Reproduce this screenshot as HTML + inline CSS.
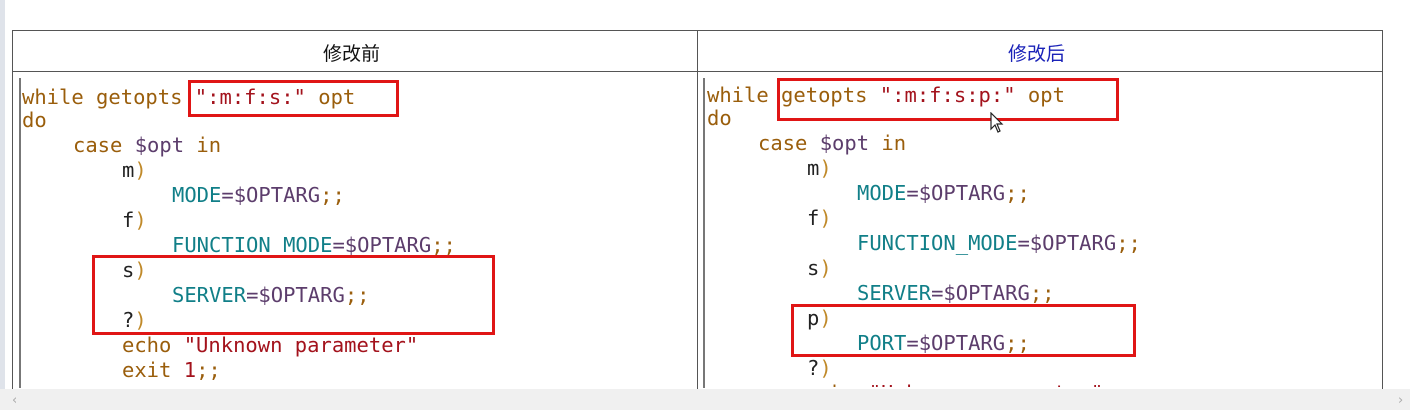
<!DOCTYPE html>
<html><head><meta charset="utf-8"><style>
body{margin:0;width:1410px;height:410px;background:#fff;position:relative;overflow:hidden;font-family:"DejaVu Sans Mono","Liberation Mono",monospace;}
.a{position:absolute}
.l{position:absolute;font-size:20.5px;line-height:24px;white-space:pre;}
.k{color:#9a5e0c}.p{color:#5c3d6c}.s{color:#a3121c}.t{color:#117f88}.b{color:#222}.o{color:#c08a2a}
.box{position:absolute;border:3px solid #e01515;}
.h{position:absolute;font-family:"Liberation Sans","Noto Sans CJK SC",sans-serif;font-size:19px;}
.clip{position:absolute;left:0;top:0;width:1410px;height:387px;overflow:hidden}
</style></head><body>
<div class="a" style="left:0;top:0;width:5px;height:392px;background:#dfe3ea"></div>
<div class="a" style="left:12px;top:30px;width:1369px;height:370px;border:1px solid #555;border-bottom:none"></div>
<div class="a" style="left:12px;top:71px;width:1370px;height:1px;background:#555"></div>
<div class="a" style="left:697px;top:30px;width:1px;height:360px;background:#555"></div>
<div class="a" style="left:19px;top:78px;width:2px;height:310px;background:#777"></div>
<div class="a" style="left:703px;top:78px;width:2px;height:310px;background:#777"></div>
<div class="h" style="left:323px;top:39px;color:#111">修改前</div>
<div class="h" style="left:1008px;top:39px;color:#1a22b8">修改后</div>
<div class="clip">
<div class="l" style="left:22px;top:85px"><span class="k">while getopts </span><span class="s">":m:f:s:"</span><span class="k"> opt</span></div>
<div class="l" style="left:22px;top:108px"><span class="k">do</span></div>
<div class="l" style="left:73px;top:133px"><span class="k">case </span><span class="p">$opt</span><span class="k"> in</span></div>
<div class="l" style="left:122px;top:158px"><span class="b">m</span><span class="o">)</span></div>
<div class="l" style="left:172px;top:183px"><span class="t">MODE</span><span class="p">=$OPTARG</span><span class="k">;;</span></div>
<div class="l" style="left:122px;top:208px"><span class="b">f</span><span class="o">)</span></div>
<div class="l" style="left:172px;top:233px"><span class="t">FUNCTION_MODE</span><span class="p">=$OPTARG</span><span class="k">;;</span></div>
<div class="l" style="left:122px;top:258px"><span class="b">s</span><span class="o">)</span></div>
<div class="l" style="left:172px;top:283px"><span class="t">SERVER</span><span class="p">=$OPTARG</span><span class="k">;;</span></div>
<div class="l" style="left:122px;top:308px"><span class="b">?</span><span class="o">)</span></div>
<div class="l" style="left:122px;top:333px"><span class="k">echo </span><span class="s">"Unknown parameter"</span></div>
<div class="l" style="left:122px;top:358px"><span class="k">exit </span><span class="s">1</span><span class="k">;;</span></div>

<div class="l" style="left:707px;top:83px"><span class="k">while getopts </span><span class="s">":m:f:s:p:"</span><span class="k"> opt</span></div>
<div class="l" style="left:707px;top:106px"><span class="k">do</span></div>
<div class="l" style="left:758px;top:131px"><span class="k">case </span><span class="p">$opt</span><span class="k"> in</span></div>
<div class="l" style="left:807px;top:156px"><span class="b">m</span><span class="o">)</span></div>
<div class="l" style="left:857px;top:181px"><span class="t">MODE</span><span class="p">=$OPTARG</span><span class="k">;;</span></div>
<div class="l" style="left:807px;top:206px"><span class="b">f</span><span class="o">)</span></div>
<div class="l" style="left:857px;top:231px"><span class="t">FUNCTION_MODE</span><span class="p">=$OPTARG</span><span class="k">;;</span></div>
<div class="l" style="left:807px;top:256px"><span class="b">s</span><span class="o">)</span></div>
<div class="l" style="left:857px;top:281px"><span class="t">SERVER</span><span class="p">=$OPTARG</span><span class="k">;;</span></div>
<div class="l" style="left:807px;top:306px"><span class="b">p</span><span class="o">)</span></div>
<div class="l" style="left:857px;top:331px"><span class="t">PORT</span><span class="p">=$OPTARG</span><span class="k">;;</span></div>
<div class="l" style="left:807px;top:356px"><span class="b">?</span><span class="o">)</span></div>
<div class="l" style="left:807px;top:381px"><span class="k">echo </span><span class="s">"Unknown parameter"</span></div>
</div>
<div class="box" style="left:188px;top:80px;width:205px;height:31px"></div>
<div class="box" style="left:92px;top:255px;width:397px;height:74px"></div>
<div class="box" style="left:777px;top:78px;width:336px;height:37px"></div>
<div class="box" style="left:791px;top:304px;width:339px;height:47px"></div>
<svg class="a" style="left:990px;top:112px" width="14" height="22" viewBox="0 0 14 22"><path d="M1 1 L1 17 L5 13 L8 20 L10 19 L7 12 L12 12 Z" fill="#fff" stroke="#222" stroke-width="1.2"/></svg>

<div class="a" style="left:0;top:389px;width:1410px;height:21px;background:#f0f0f0"></div>
<div class="a" style="left:12px;top:393px;font-size:13px;color:#aaa;font-family:'DejaVu Sans',sans-serif">‹</div>
<div class="a" style="left:1398px;top:393px;font-size:13px;color:#aaa;font-family:'DejaVu Sans',sans-serif">›</div>
</body></html>
